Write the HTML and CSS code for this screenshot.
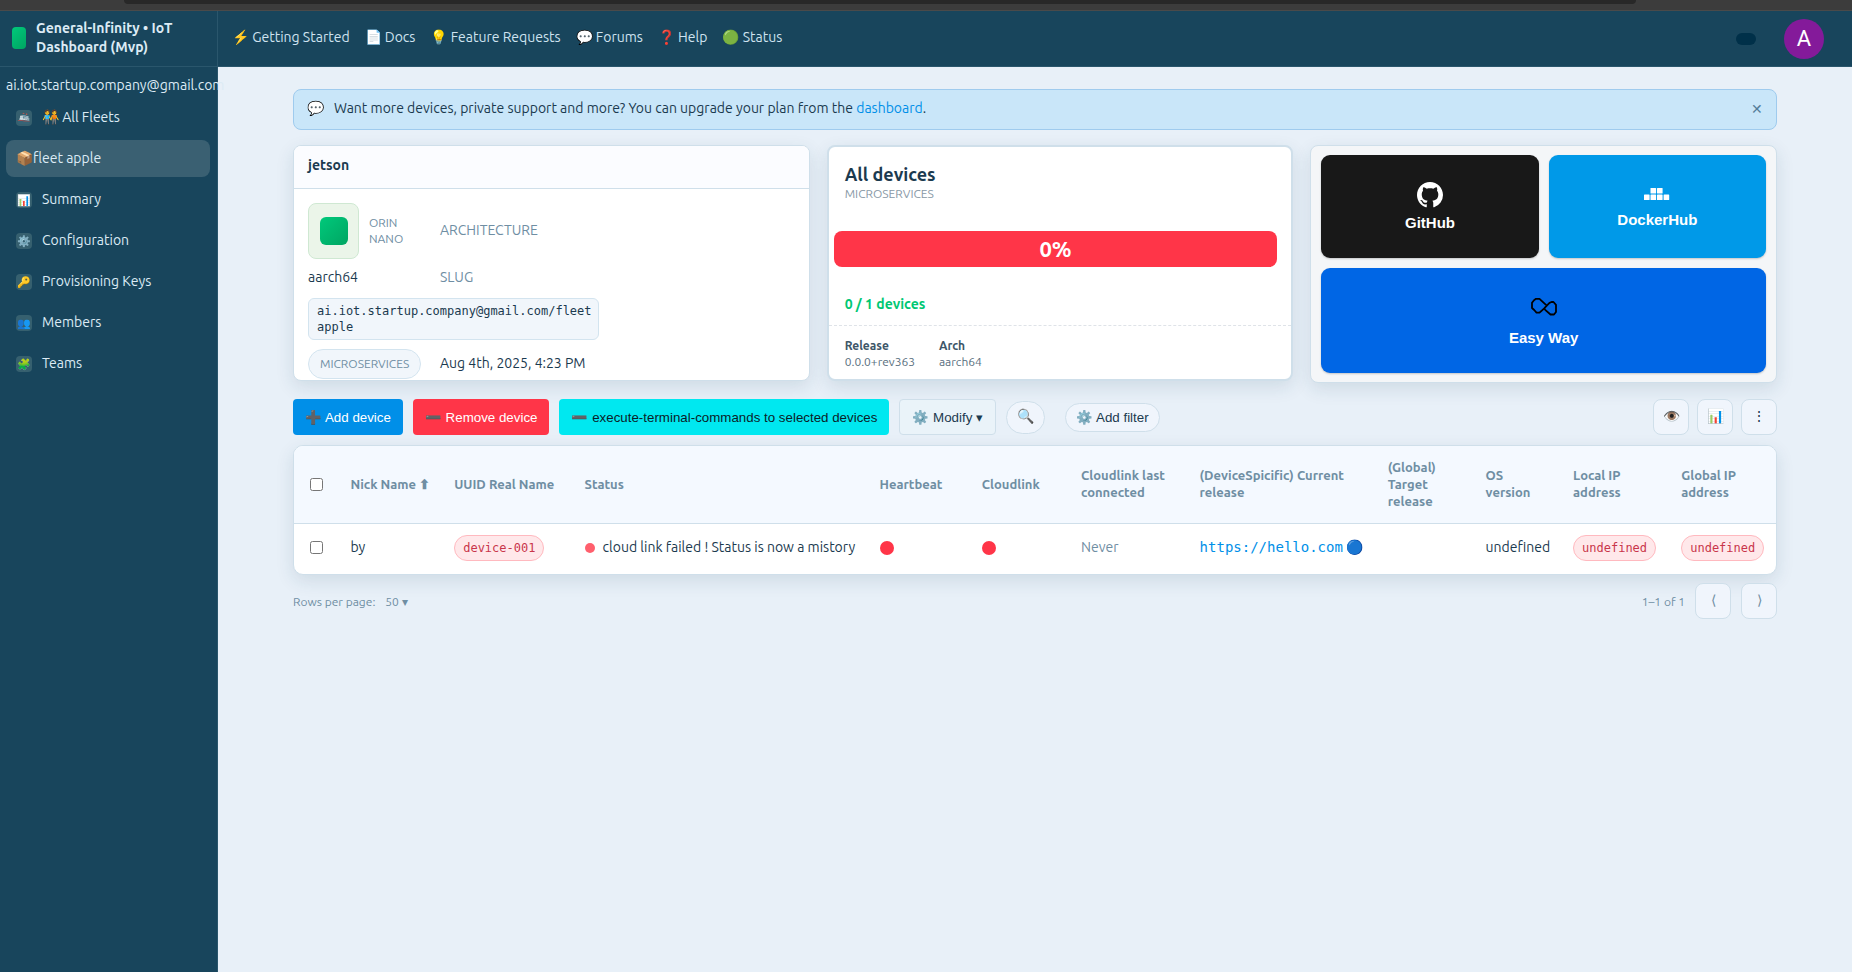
FILE: index.html
```html
<!DOCTYPE html>
<html lang="en">
<head>
  <meta charset="UTF-8" />
  <meta name="viewport" content="width=device-width, initial-scale=1.0" />
  <title>General-Infinity • IoT Dashboard (Mvp)</title>
  <link rel="stylesheet" href="styles.css">
</head>
<body>
  <div class="browser-strip"><div class="omnibox"></div></div>

  <div class="app">
    <!-- ======= SIDEBAR ======= -->
    <aside class="sidebar">
      <div class="brand">
        <span class="brand-logo"></span>
        <span class="brand-name">General-Infinity • IoT Dashboard (Mvp)</span>
      </div>
      <div class="account">ai.iot.startup.company@gmail.com</div>
      <nav class="side-nav">
        <a href="#"><span class="ico">🚢</span>🧑‍🤝‍🧑 All Fleets</a>
        <a href="#" class="active">📦fleet apple</a>
        <a href="#"><span class="ico">📊</span>Summary</a>
        <a href="#"><span class="ico">⚙️</span>Configuration</a>
        <a href="#"><span class="ico">🔑</span>Provisioning Keys</a>
        <a href="#"><span class="ico">👥</span>Members</a>
        <a href="#"><span class="ico">🧩</span>Teams</a>
      </nav>
    </aside>

    <div class="page">
      <!-- ======= TOPBAR ======= -->
      <header class="topbar">
        <nav class="top-nav">
          <a href="#">⚡ Getting Started</a>
          <a href="#">📄 Docs</a>
          <a href="#">💡 Feature Requests</a>
          <a href="#">💬 Forums</a>
          <a href="#">❓ Help</a>
          <a href="#">🟢 Status</a>
        </nav>
        <div class="user">
          <span class="user-tag"></span>
          <span class="avatar">A</span>
        </div>
      </header>

      <main>
        <div class="banner">
          <span class="banner-icon">💬</span>
          <p>Want more devices, private support and more? You can upgrade your plan from the <a href="#">dashboard</a>.</p>
          <button class="banner-close" aria-label="Close">✕</button>
        </div>

        <!-- ======= CARDS ======= -->
        <section class="cards">
          <article class="card">
            <h2 class="card-head">jetson</h2>
            <div class="fleet">
              <div class="board">
                <span class="board-icon"><i></i></span>
                <span class="board-name">ORIN NANO</span>
              </div>
              <span class="muted">ARCHITECTURE</span>
              <span>aarch64</span>
              <span class="muted">SLUG</span>
              <code class="slug">ai.iot.startup.company@gmail.com/fleet apple</code>
              <span class="chip">MICROSERVICES</span>
              <span>Aug 4th, 2025, 4:23 PM</span>
            </div>
          </article>

          <article class="card devices">
            <div class="devices-head">
              <h2>All devices</h2>
              <p>MICROSERVICES</p>
            </div>
            <div class="progress">0%</div>
            <p class="count">0 / 1 devices</p>
            <dl class="facts">
              <div><dt>Release</dt><dd>0.0.0+rev363</dd></div>
              <div><dt>Arch</dt><dd>aarch64</dd></div>
            </dl>
          </article>

          <div class="card tiles">
            <button class="tile github">
              <svg width="26" height="26" viewBox="0 0 16 16" fill="currentColor"><path d="M8 0C3.58 0 0 3.58 0 8c0 3.54 2.29 6.53 5.47 7.59.4.07.55-.17.55-.38 0-.19-.01-.82-.01-1.49-2.01.37-2.53-.49-2.69-.94-.09-.23-.48-.94-.82-1.13-.28-.15-.68-.52-.01-.53.63-.01 1.08.58 1.23.82.72 1.21 1.87.87 2.33.66.07-.52.28-.87.51-1.07-1.78-.2-3.64-.89-3.64-3.95 0-.87.31-1.59.82-2.15-.08-.2-.36-1.02.08-2.12 0 0 .67-.21 2.2.82.64-.18 1.32-.27 2-.27s1.36.09 2 .27c1.53-1.04 2.2-.82 2.2-.82.44 1.1.16 1.92.08 2.12.51.56.82 1.27.82 2.15 0 3.07-1.87 3.75-3.65 3.95.29.25.54.73.54 1.48 0 1.07-.01 1.93-.01 2.2 0 .21.15.46.55.38A8.01 8.01 0 0 0 16 8c0-4.42-3.58-8-8-8z"/></svg>
              GitHub
            </button>
            <button class="tile docker">
              <svg width="26" height="20" viewBox="0 0 26 20" fill="currentColor"><rect x="6.5" y="3" width="5.6" height="5.6" rx=".6"/><rect x="13" y="3" width="5.6" height="5.6" rx=".6"/><rect x="0" y="9.4" width="5.6" height="5.6" rx=".6"/><rect x="6.5" y="9.4" width="5.6" height="5.6" rx=".6"/><rect x="13" y="9.4" width="5.6" height="5.6" rx=".6"/><rect x="19.6" y="9.4" width="5.6" height="5.6" rx=".6"/></svg>
              DockerHub
            </button>
            <button class="tile easy">
              <svg width="26" height="28" viewBox="0 0 26 28" fill="none" stroke="#000" stroke-width="1.8" stroke-linejoin="round"><path d="M5 3.800H8.500L15.800 10.600L18.500 7.800L20.500 7H22.500L25 9.800V17L23 19.500H19.500L14.200 14.800L13.200 13.400L10 16.300L8.500 17.600H5.500L3.200 15L1 13V7.800L3 5.200ZM15.800 10.600L13.200 13.400"/></svg>
              Easy Way
            </button>
          </div>
        </section>

        <!-- ======= TOOLBAR ======= -->
        <div class="toolbar">
          <button class="btn btn-add">➕ Add device</button>
          <button class="btn btn-remove">➖ Remove device</button>
          <button class="btn btn-exec">➖ execute-terminal-commands to selected devices</button>
          <button class="btn btn-modify">⚙️ Modify ▾</button>
          <button class="btn-search" aria-label="Search">🔍</button>
          <button class="btn-filter">⚙️ Add filter</button>
          <div class="tools">
            <button class="square" aria-label="Columns">👁️</button>
            <button class="square" aria-label="Charts">📊</button>
            <button class="square" aria-label="More">⋮</button>
          </div>
        </div>

        <!-- ======= DEVICE TABLE ======= -->
        <div class="table-wrap">
          <table>
            <colgroup>
              <col class="c-check"><col class="c-nick"><col class="c-uuid"><col class="c-status">
              <col class="c-heart"><col class="c-cloud"><col class="c-last"><col class="c-current">
              <col class="c-target"><col class="c-os"><col class="c-local"><col class="c-global">
            </colgroup>
            <thead>
              <tr>
                <th><input type="checkbox" aria-label="Select all"></th>
                <th>Nick Name ⬆</th>
                <th>UUID Real Name</th>
                <th>Status</th>
                <th>Heartbeat</th>
                <th>Cloudlink</th>
                <th>Cloudlink last connected</th>
                <th>(DeviceSpicific) Current release</th>
                <th>(Global) Target release</th>
                <th>OS version</th>
                <th>Local IP address</th>
                <th>Global IP address</th>
              </tr>
            </thead>
            <tbody>
              <tr>
                <td><input type="checkbox" aria-label="Select device"></td>
                <td>by</td>
                <td><code class="pill">device-001</code></td>
                <td><span class="dot"></span>cloud link failed ! Status is now a mistory</td>
                <td><span class="light"></span></td>
                <td><span class="light"></span></td>
                <td class="muted">Never</td>
                <td><a class="release" href="#">https://hello.com</a> 🔵</td>
                <td></td>
                <td>undefined</td>
                <td><code class="pill">undefined</code></td>
                <td><code class="pill">undefined</code></td>
              </tr>
            </tbody>
          </table>
        </div>

        <div class="pager">
          <span>Rows per page:</span>
          <button class="rows">50 ▾</button>
          <span class="range">1–1 of 1</span>
          <button class="square" aria-label="Previous page">⟨</button>
          <button class="square" aria-label="Next page">⟩</button>
        </div>
      </main>
    </div>
  </div>
</body>
</html>
```
FILE: styles.css
```css
:root {
  --navy: #18455c;
  --navy-line: #2a566c;
  --bg: #e8f0f8;
  --ink: #1b3a4f;
  --muted: #6f8ea3;
  --line: #cfdfea;
  --blue: #008fe8;
  --red: #ff3548;
  --green: #00c774;
  --mono: "DejaVu Sans Mono", monospace;
}

/* ======= GLOBAL RESET ======= */
*,*::before,*::after{box-sizing:border-box;margin:0;padding:0}

body {
  font-family: Ubuntu, "Noto Sans", sans-serif;
  font-size: 14px;
  line-height: 19px;
  color: var(--ink);
  background: var(--bg);
  min-height: 100vh;
  display: flex;
  flex-direction: column;
}
a{text-decoration:none;color:var(--blue)}
button{font-family:"Liberation Sans",Arial,sans-serif;color:var(--ink);cursor:pointer}

.browser-strip{height:11px;background:#3c3c3c;border-bottom:1px solid #4a4a4a;padding:0 216px 0 124px}
.omnibox{height:4px;background:#282828;border-radius:0 0 12px 12px}

.app{flex:1;display:flex}
.page{flex:1;min-width:0}

/* ======= SIDEBAR ======= */
.sidebar{width:218px;flex-shrink:0;background:var(--navy);border-right:1px solid var(--navy-line);color:#dcebf5;white-space:nowrap}
.brand{display:flex;align-items:center;gap:10px;height:56px;padding:0 12px 2px;border-bottom:1px solid var(--navy-line);font-weight:700}
.brand-name{white-space:normal}
.brand-logo{width:14px;height:22px;flex-shrink:0;border-radius:4px;background:linear-gradient(135deg,#00c97b,#00a562)}
.account{padding:9px 6px 4px}
.side-nav{display:flex;flex-direction:column;gap:4px;padding:0 7px 0 6px}
.side-nav a{display:flex;align-items:center;height:37px;padding:0 10px;border-radius:8px;color:#dcebf5}
.side-nav .active{background:#3a6072}
.ico{width:16px;height:16px;margin-right:10px;border-radius:4px;background:#36606f;font-size:11px;line-height:16px;text-align:center}

/* ======= TOPBAR ======= */
.topbar{height:56px;background:var(--navy);border-bottom:1px solid var(--navy-line);display:flex;align-items:center;justify-content:space-between;padding:0 28px 0 14px}
.top-nav{display:flex;gap:15px;padding-bottom:2px}
.top-nav a{color:#cfe3f0}
.user{display:flex;align-items:center;gap:28px}
.user-tag{width:20px;height:12px;border-radius:6px;background:#003049}
.avatar{width:40px;height:40px;border-radius:50%;background:#841a9a;color:#fff;font:22px/40px Roboto,sans-serif;text-align:center}

main{padding:22px 75px}

/* ======= BANNER ======= */
.banner{display:flex;align-items:center;gap:10px;height:41px;padding:0 13px 2px;background:#c9e6f9;border:1px solid #9fcbee;border-radius:8px;margin-bottom:15px}
.banner-close{margin-left:auto;background:none;border:0;color:#557d99;font-size:14px}

/* ======= CARDS ======= */
.cards{display:grid;grid-template-columns:31fr 28fr 28fr;gap:17px;align-items:start}
.card{background:#fff;border:1px solid var(--line);border-radius:8px;box-shadow:0 6px 18px rgba(24,69,92,.12);min-height:236px;overflow:hidden}
.card-head{height:43px;padding:0 14px;background:#fbfcff;border-bottom:1px solid var(--line);font-size:14px;font-weight:700;line-height:38px}
.fleet{display:grid;grid-template-columns:120px 1fr;gap:9px 12px;padding:14px 14px 0;align-items:center;justify-items:start}
.board{display:flex;align-items:center;gap:10px;color:var(--muted);font-size:12px;line-height:16px}
.board-icon{width:51px;height:56px;flex-shrink:0;border:1px solid #cfe8d2;border-radius:8px;background:#ebf5e9;display:flex;align-items:center;justify-content:center}
.board-icon i{width:28px;height:28px;border-radius:6px;background:linear-gradient(135deg,#00c97b,#00a562)}
.muted{color:var(--muted)}
.fleet > span{padding-bottom:2px}
.slug{grid-column:1 / -1;max-width:291px;padding:4px 8px;border:1px solid #d3e4ef;border-radius:6px;background:#f1f6fb;font:12px/16px var(--mono)}
.fleet .chip{padding:6px 11px;border:1px solid #d3e4ef;border-radius:15px;background:#f1f6fb;color:var(--muted);font-size:12px;line-height:16px}

.devices{border-width:2px}
.devices-head{padding:16px 16px 0}
.devices-head h2{font-size:18px;font-weight:700;line-height:22px}
.devices-head p{font-size:12px;line-height:18px;color:#8898a6}
.progress{margin:28px 14px 28px 5px;height:36px;border-radius:8px;background:var(--red);color:#fff;font-size:22px;font-weight:700;line-height:36px;text-align:center}
.count{padding:0 16px 11px;color:var(--green);font-weight:700}
.facts{display:flex;gap:24px;padding:12px 16px 0;border-top:1px dashed #dfe3e8;font-size:12px;line-height:16px;color:#5a7080}
.facts dt{font-weight:700;color:#3d5668}

.tiles{display:grid;grid-template-columns:1fr 1fr;grid-template-rows:103px 105px;gap:10px;padding:9px 10px;background:#f4f6f8}
.tile{display:flex;flex-direction:column;align-items:center;justify-content:center;gap:6px;border:0;border-radius:9px;color:#fff;font-size:15px;font-weight:700;box-shadow:0 1px 2px rgba(0,0,0,.2)}
.github{background:#181818}
.docker{background:#0099e8}
.easy{grid-column:1 / -1;background:#0066e5}

/* ======= TOOLBAR ======= */
.toolbar{display:flex;align-items:center;gap:10px;margin:16px 0 10px}
.btn{height:36px;padding:0 12px;border:0;border-radius:4px}
.btn-add{background:var(--blue);color:#fff}
.btn-remove{background:var(--red);color:#fff}
.btn-exec{background:#00e8f0;color:#0b1d28}
.btn-modify{border:1px solid var(--line);background:#eaf3f9}
.btn-search{width:39px;height:33px;padding-bottom:2px;border:1px solid var(--line);border-radius:17px;background:#f0f5fc;font-size:14px}
.btn-filter{height:29px;margin-left:10px;padding:0 10px;border:1px solid var(--line);border-radius:15px;background:#f0f5fc}
.tools{display:flex;gap:8px;margin-left:auto}
.square{width:36px;height:36px;padding-bottom:3px;border:1px solid var(--line);border-radius:8px;background:#f0f5fc;font-size:14px}

/* ======= TABLE ======= */
.table-wrap{background:#fff;border:1px solid var(--line);border-radius:10px;box-shadow:0 6px 18px rgba(24,69,92,.12);overflow:hidden}
table{width:100%;border-collapse:collapse;table-layout:fixed}
th,td{padding:0 12px;text-align:left;white-space:nowrap}
th{height:77px;background:#f4f9ff;border-bottom:1px solid var(--line);color:var(--muted);font-size:13px;font-weight:600;line-height:17px;white-space:normal}
td{height:51px;padding-bottom:2px}
td .pill{display:inline-block}
input[type=checkbox]{display:block;width:13px;height:13px;margin:0 4px}
.c-check{width:3%}.c-nick{width:7%}.c-uuid{width:8.8%}.c-status{width:19.9%}
.c-heart{width:6.9%}.c-cloud{width:6.7%}.c-last{width:8%}.c-current{width:12.7%}
.c-target{width:6.6%}.c-os{width:5.9%}.c-local{width:7.3%}.c-global{width:7.2%}
.pill{padding:4px 8px;border:1px solid #ffb9bf;border-radius:13px;background:#ffe8ea;color:#c9364a;font:12px/16px var(--mono)}
.dot{display:inline-block;width:10px;height:10px;margin-right:8px;border-radius:50%;background:#ff5f6d;vertical-align:-1px}
.light{display:block;width:14px;height:14px;border-radius:50%;background:var(--red)}
.release{font-family:var(--mono)}

/* ======= PAGER ======= */
.pager{display:flex;align-items:center;gap:10px;margin-top:8px;font-size:12px;color:var(--muted)}
.pager .square{color:var(--muted)}
.rows{border:0;background:none;font:inherit;color:var(--muted)}
.range{margin-left:auto}
```
